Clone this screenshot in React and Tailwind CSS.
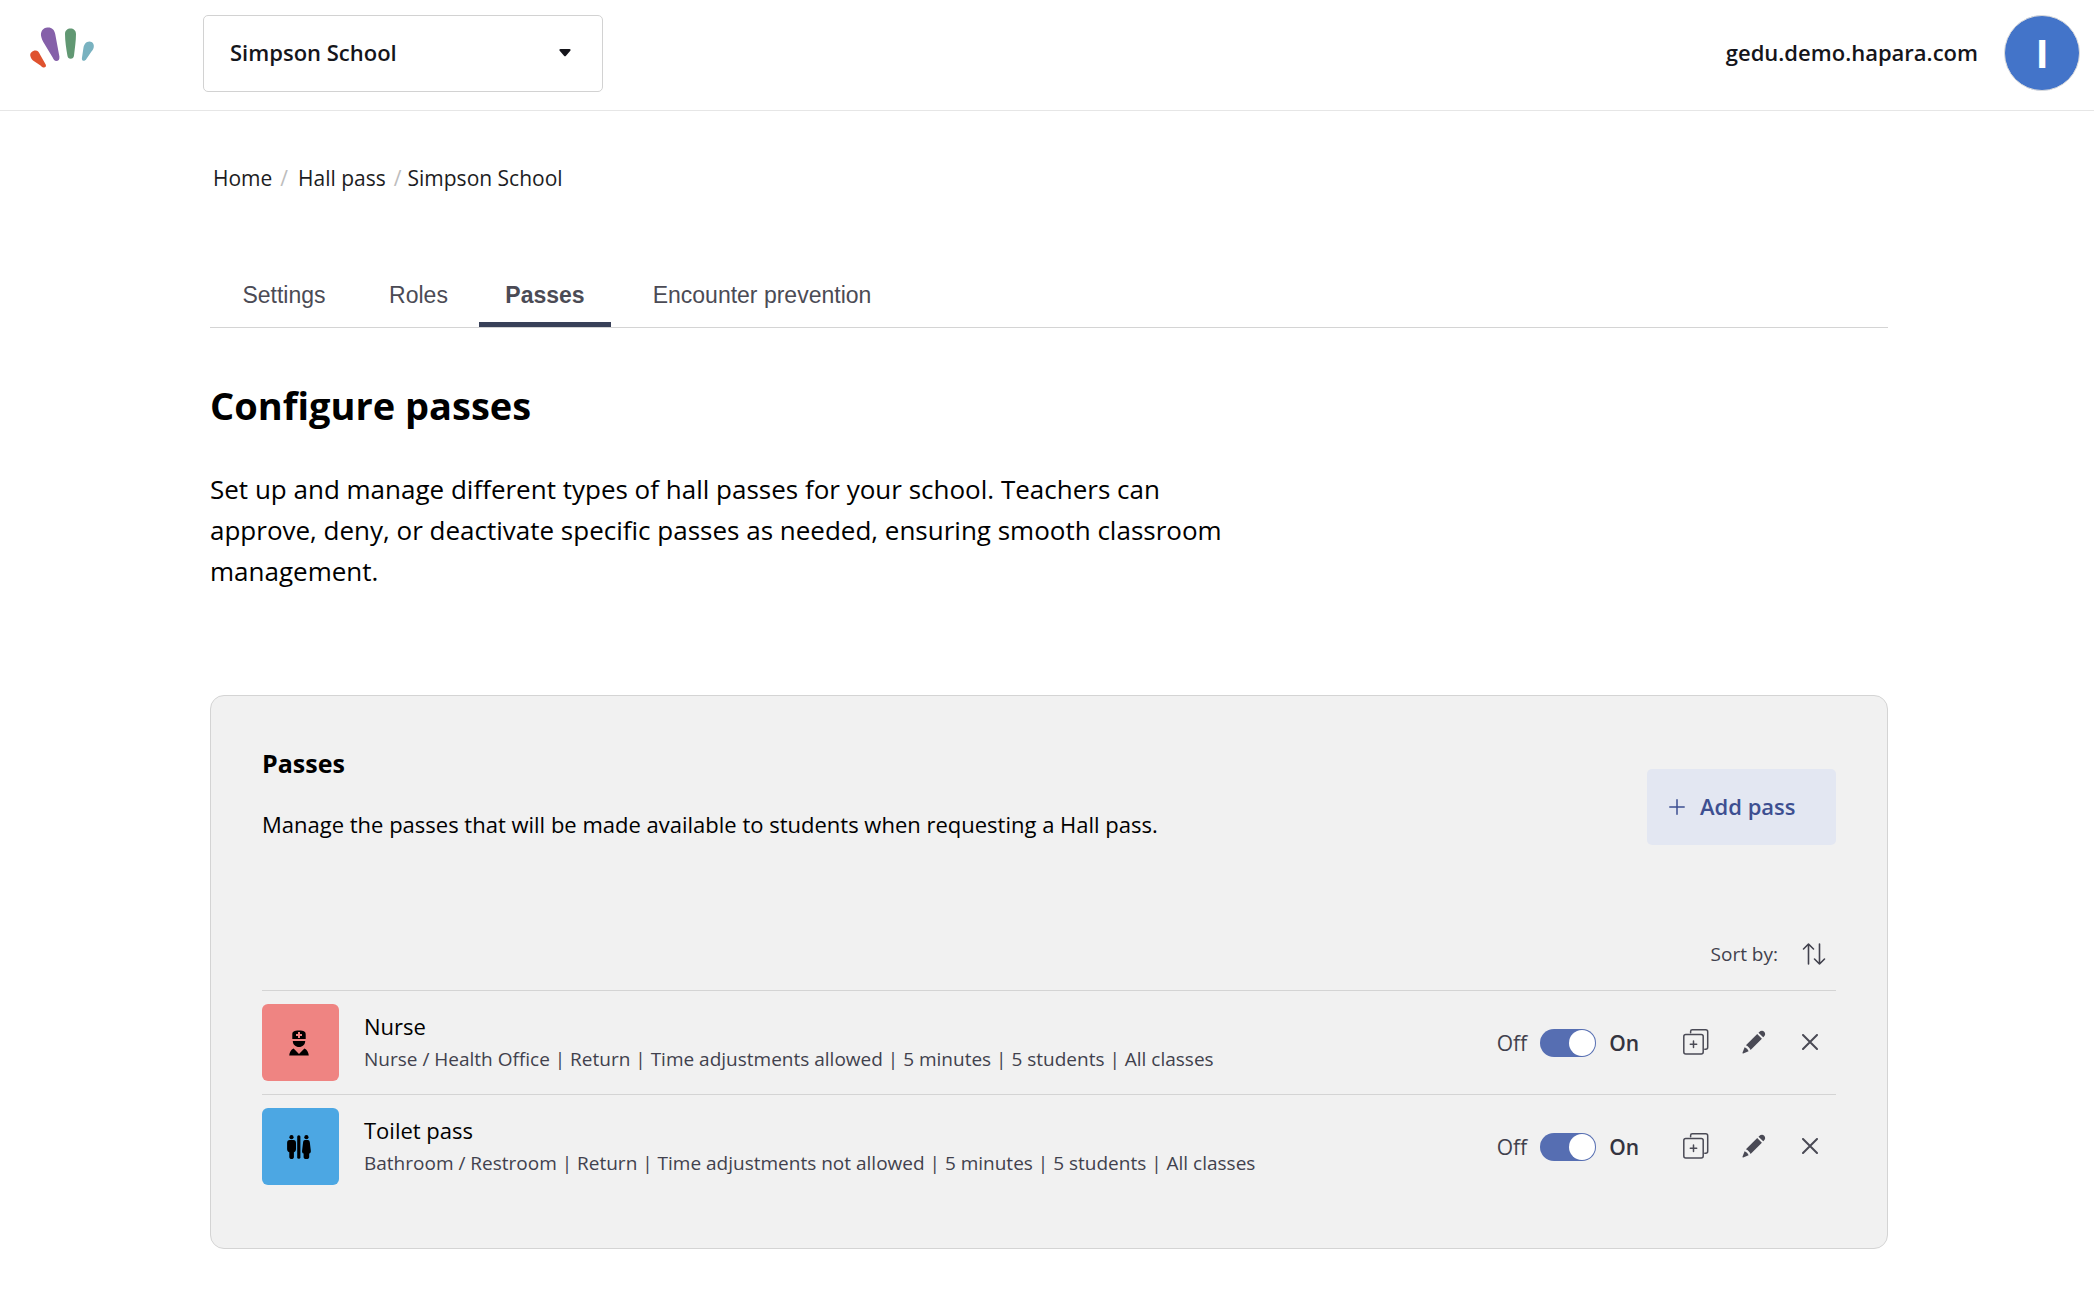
import React, { useState } from "react";

function Logo() {
  return (
    <svg width="68" height="44" viewBox="0 0 68 44" aria-hidden="true">
      <path fill="#df522f" d="M1.500 29.500C.3 26 3.600 23.500 6.500 23.500C8.800 23.500 9.800 25 11 27.500L16.700 37.500C17.700 39.500 16 41 14.300 40.500C13.300 40.300 12.500 39.500 11.500 38.500L4 33.500C2.500 32.200 1.900 31 1.500 29.500Z" />
      <path fill="#8560a9" d="M12.300 10C11 4.500 14 .8 18.500 .5C22.700 .2 25.300 2.500 26.200 7L30.400 29.500C30.700 32.500 29.500 34 27.300 34C25.500 34 24.600 32.800 23.800 30.800L14.300 15C13.300 13.200 12.700 11.700 12.300 10Z" />
      <path fill="#619873" d="M36 7C36 3.500 38.500 1.600 41.500 1.600C44.500 1.600 47 3.500 47 7C47 14 45.700 22 45 28.500C44.700 30.700 43.500 31.700 41.700 31.700C39.900 31.700 38.700 30.700 38.400 28.500C37.300 22 36 14 36 7Z" />
      <path fill="#79b2c0" d="M60.500 14.600C63.500 14.600 65.500 17.500 64.700 20.500C64.200 22.500 63 24 61.800 25.500L57.200 32.300C56.200 33.800 54.800 34.200 53.600 33.400C52.900 32.900 52.800 31.700 53 30.500L54.500 20.500C55.200 17.500 57 14.600 60.500 14.600Z" />
    </svg>
  );
}

function PlusIcon() {
  return (
    <svg width="16" height="16" viewBox="0 0 16 16" fill="none" stroke="currentColor" strokeWidth="1.5" strokeLinecap="round" aria-hidden="true">
      <path d="M8 .8v14.400M.8 8h14.400" />
    </svg>
  );
}

function SortIcon() {
  return (
    <svg width="24" height="24" viewBox="0 0 24 24" fill="none" stroke="currentColor" strokeWidth="1.6" strokeLinecap="round" strokeLinejoin="round" aria-hidden="true">
      <path d="M6.500 22V2M1.500 7l5-5 5 5M17.500 2v20M12.500 17l5 5 5-5" />
    </svg>
  );
}

function CopyIcon() {
  return (
    <svg width="26" height="26" viewBox="0 0 26 26" fill="none" stroke="currentColor" strokeWidth="1.5" strokeLinecap="round" strokeLinejoin="round" aria-hidden="true">
      <rect x=".8" y="5.600" width="19.400" height="19.400" rx="2" />
      <path d="M7.600 3.800V2.500C7.600 1.400 8.300.8 9.300.8h13.400c1.200 0 2 .8 2 2v15.400c0 1.200-.8 2-2 2h-.9" />
      <path d="M10.500 12.100v6.400M7.300 15.300h6.400" />
    </svg>
  );
}

function PencilIcon() {
  return (
    <svg width="24" height="24" viewBox="0 0 24 24" fill="currentColor" aria-hidden="true">
      <path d="M17 2.200C18.800.4 20.800.3 22.200 1.700C23.600 3.100 23.500 5.100 21.800 6.800L21.200 7.300L16.500 2.700Z" />
      <path d="M15.200 4L19.900 8.700L8.600 20C7.800 18 5.900 16.100 3.900 15.300Z" />
      <path d="M2.600 17.300C4.400 17.900 6 19.500 6.600 21.300L1.200 23.500C.7 23.700.3 23.300.5 22.800Z" />
    </svg>
  );
}

function CloseIcon() {
  return (
    <svg width="16" height="16" viewBox="0 0 16 16" fill="none" stroke="currentColor" strokeWidth="2" strokeLinecap="round" aria-hidden="true">
      <path d="M1 1l14 14M15 1L1 15" />
    </svg>
  );
}

function NurseIcon() {
  return (
    <svg width="20" height="26" viewBox="0 0 20 26" aria-hidden="true">
      <path fillRule="evenodd" d="M3.300 9V4.500C3.300 1.500 5 .5 10 .5s6.700 1 6.700 4V9ZM9 2v2H7v2h2v2h2V6h2V4h-2V2Z" />
      <path d="M3.800 11h12.400c0 3.600-2.700 6-6.200 6s-6.200-2.400-6.200-6Z" />
      <path d="M.2 25.500C.5 22.500 2 19.500 4.600 18.500L10 24l5.400-5.500c2.600 1 4.100 4 4.400 7Z" />
    </svg>
  );
}

function RestroomIcon() {
  return (
    <svg width="24" height="24" viewBox="0 0 24 24" aria-hidden="true">
      <circle cx="4.500" cy="2.200" r="2.100" />
      <path d="M2.700 5h3.600C8.200 5 9 6.300 9 8v6c0 1.600-.6 2.800-2.100 3.200V22c0 1.100-.7 1.900-1.500 1.900H3.900c-.9 0-1.600-.8-1.600-1.900v-4.800C.7 16.800.1 15.600.1 14V8c0-1.700.8-3 2.600-3Z" />
      <rect x="10.200" y=".2" width="3.200" height="23.600" rx="1.500" />
      <circle cx="19.400" cy="2.200" r="2.100" />
      <path d="M18 5h2.800c1.100 0 1.700.8 2 2.200l1 8.300c.2 1.700-.3 2.700-1.600 3v3.500c0 1.100-.7 1.900-1.600 1.900h-2.400c-.9 0-1.600-.8-1.600-1.900v-3.500c-1.300-.3-1.700-1.300-1.500-3l1-8.300C16.400 5.800 16.900 5 18 5Z" />
    </svg>
  );
}

const tabs = [
  { label: "Settings", width: "w-[148px]" },
  { label: "Roles", width: "w-[121px]" },
  { label: "Passes", width: "w-[132px]" },
  { label: "Encounter prevention", width: "w-[302px]" },
];

const passes = [
  {
    name: "Nurse",
    details: "Nurse / Health Office | Return | Time adjustments allowed | 5 minutes | 5 students | All classes",
    tile: "bg-[#ef8482]",
    icon: <NurseIcon />,
  },
  {
    name: "Toilet pass",
    details: "Bathroom / Restroom | Return | Time adjustments not allowed | 5 minutes | 5 students | All classes",
    tile: "bg-[#4ca7e3]",
    icon: <RestroomIcon />,
  },
];

function PassRow({ pass }) {
  const [on, setOn] = useState(true);
  return (
    <li className="flex items-center border-t border-[#d4d4d4] py-[13px]">
      <div className={`flex size-[77px] shrink-0 items-center justify-center rounded-md pr-1 ${pass.tile}`}>
        {pass.icon}
      </div>
      <div className="ml-[25px] min-w-0 flex-1 pb-0.5">
        <h3 className="text-[22px] leading-[34px] text-black">{pass.name}</h3>
        <p className="text-[19px] leading-[32px]">{pass.details}</p>
      </div>
      <label className="flex items-center text-[21px] leading-7">
        <span>Off</span>
        <input
          type="checkbox"
          role="switch"
          aria-label={`${pass.name} available`}
          checked={on}
          onChange={(e) => setOn(e.target.checked)}
          className="peer sr-only"
        />
        <span className="mx-[13px] flex h-7 w-14 items-center rounded-full bg-gray-400 p-px peer-checked:justify-end peer-checked:bg-[#566eb2]">
          <span className="size-[26px] rounded-full bg-white" />
        </span>
        <span className="font-semibold text-[#34343f]">On</span>
      </label>
      <div className="ml-[44px] mr-[18px] flex items-center pb-0.5 text-[#4a4a55]">
        <button type="button" aria-label={`Duplicate ${pass.name}`}><CopyIcon /></button>
        <button type="button" aria-label={`Edit ${pass.name}`} className="ml-[33px]"><PencilIcon /></button>
        <button type="button" aria-label={`Delete ${pass.name}`} className="ml-9"><CloseIcon /></button>
      </div>
    </li>
  );
}

export default function App() {
  return (
    <div className="min-h-screen bg-white font-['Open_Sans',sans-serif] text-[#41414d]">
      <header className="flex h-[111px] items-start border-b border-[#e6e6e6] pl-[29px] pr-[14px] text-[#15151b]">
        <a href="#home" aria-label="Home" className="mt-[27px]"><Logo /></a>
        <div className="relative ml-[106px] mt-[15px] w-[400px]">
          <select
            aria-label="School"
            className="h-[77px] w-full appearance-none rounded-[5px] border border-[#d2d2d2] bg-white px-[26px] pb-0.5 text-[22px] font-semibold"
          >
            <option>Simpson School</option>
          </select>
          <svg className="pointer-events-none absolute right-8 top-[34px]" width="12" height="8" viewBox="0 0 12 8" aria-hidden="true">
            <path d="M1.500 0h9c1 0 1.500 1 .8 1.700L7 6.800c-.6.700-1.400.7-2 0L.7 1.700C0 1 .5 0 1.500 0Z" fill="currentColor" />
          </svg>
        </div>
        <div className="ml-auto mt-[15px] flex items-center gap-[26px]">
          <span className="pb-0.5 text-[22px] font-semibold">gedu.demo.hapara.com</span>
          <button type="button" aria-label="Account" className="flex size-[76px] items-center justify-center rounded-full border border-[#dcdcdc] bg-[#4374c9] text-[40px] font-bold leading-none text-white">
            I
          </button>
        </div>
      </header>

      <main className="pb-14 pl-[210px] pr-[206px]">
        <nav aria-label="Breadcrumb" className="mt-[51px] pl-[3px]">
          <ol className="flex text-[21px] leading-8 text-[#1c1c22]">
            <li><a href="#home">Home</a></li>
            <li className="ml-2 flex"><span className="mr-2.5 text-[#bdbdbd]" aria-hidden="true">/</span><a href="#hall-pass">Hall pass</a></li>
            <li className="ml-2 flex"><span className="mr-1.5 text-[#bdbdbd]" aria-hidden="true">/</span><a href="#school">Simpson School</a></li>
          </ol>
        </nav>

        <div role="tablist" className="mt-[67px] flex border-b border-[#d4d4d4] font-['Liberation_Sans',sans-serif] text-[23px]">
          {tabs.map((t) => (
            <button
              key={t.label}
              type="button"
              role="tab"
              aria-selected={t.label === "Passes"}
              className={`h-[66px] border-b-[5px] pt-[7px] text-[#4b4b55] ${t.width} ${
                t.label === "Passes" ? "border-[#384058] font-bold" : "border-transparent"
              }`}
            >
              {t.label}
            </button>
          ))}
        </div>

        <h1 className="mt-[49px] text-[38px] font-bold leading-[56px] text-black">Configure passes</h1>
        <p className="mt-[36px] max-w-[1024px] text-[26px] leading-[41px] text-black">
          Set up and manage different types of hall passes for your school. Teachers can approve, deny, or deactivate specific passes as needed, ensuring smooth classroom management.
        </p>

        <section className="mt-[103px] rounded-[14px] border border-[#d4d4d4] bg-[#f1f1f1] px-[51px] pb-[50px] pt-[44px]">
          <div className="flex items-center justify-between">
            <div className="text-black">
              <h2 className="text-[25px] font-bold leading-9">Passes</h2>
              <p className="mt-[26px] text-[22px] leading-[34px]">
                Manage the passes that will be made available to students when requesting a Hall pass.
              </p>
            </div>
            <button type="button" className="mt-[29px] flex h-[76px] w-[189px] items-center gap-[15px] rounded-[5px] bg-[#e3e7f2] pl-[22px] text-[22px] font-semibold text-[#3d4f91]">
              <PlusIcon />
              <span className="pb-0.5">Add pass</span>
            </button>
          </div>

          <div className="mt-[95px] flex items-center justify-end gap-6 pb-[22px] pr-[10px] text-[19px] leading-[28px]">
            <span>Sort by:</span>
            <button type="button" aria-label="Change sort order"><SortIcon /></button>
          </div>

          <ul>
            {passes.map((p) => <PassRow key={p.name} pass={p} />)}
          </ul>
        </section>
      </main>
    </div>
  );
}
